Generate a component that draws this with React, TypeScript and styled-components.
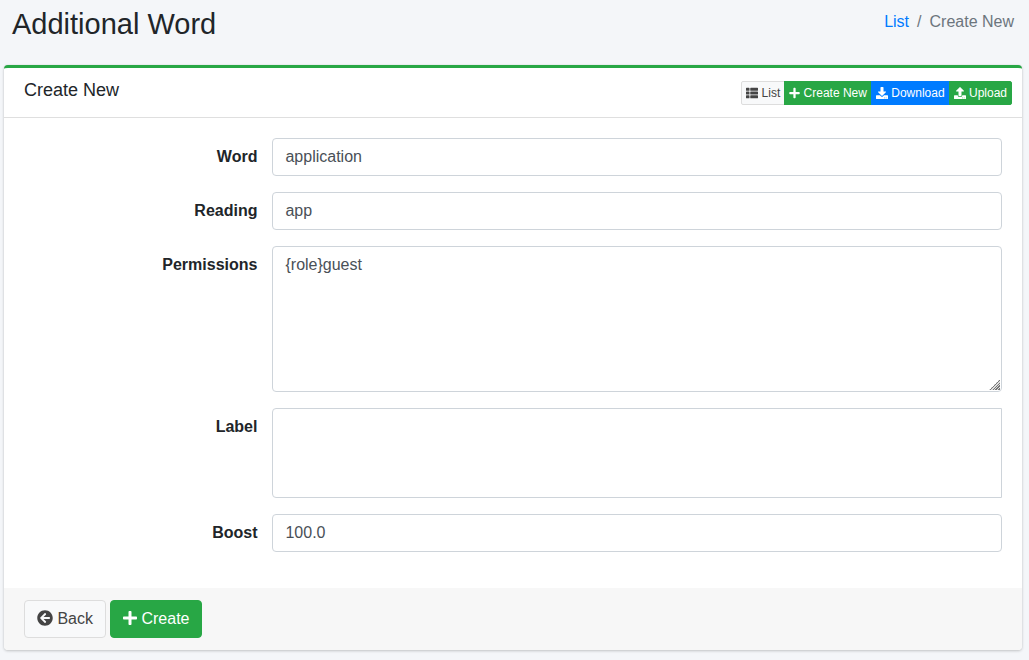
import React from "react";
import styled, { createGlobalStyle, css } from "styled-components";
import {
  FaArrowCircleLeft,
  FaDownload,
  FaPlus,
  FaThList,
  FaUpload,
} from "react-icons/fa";

const GlobalStyle = createGlobalStyle`
  *, *::before, *::after { box-sizing: border-box; }
  body {
    margin: 0;
    min-height: 100vh;
    background: #f4f6f9;
    color: #212529;
    font: 400 16px/24px "Liberation Sans", Arial, sans-serif;
  }
  input, select, textarea, button { margin: 0; font: inherit; }
`;

const Page = styled.div`
  padding: 4px 7px 9px 4px;
`;

const PageHeader = styled.header`
  display: flex;
  justify-content: space-between;
  align-items: flex-start;
  padding: 0 8px 21px;
`;

const PageTitle = styled.h1`
  margin: 0;
  font-size: 29px;
  font-weight: 400;
  line-height: 40px;
`;

const Breadcrumb = styled.ol`
  display: flex;
  margin: 0;
  padding: 6px 0 0;
  list-style: none;
  color: #6c757d;
`;

const Crumb = styled.li`
  & + &::before {
    content: "/";
    padding: 0 8px;
  }
`;

const CrumbLink = styled.a`
  color: #007bff;
  text-decoration: none;
`;

const Card = styled.form`
  border-top: 3px solid #28a745;
  border-radius: 4px;
  background: #fff;
  box-shadow: 0 0 1px rgba(0, 0, 0, 0.125), 0 1px 3px rgba(0, 0, 0, 0.2);
`;

const CardHeader = styled.div`
  display: flex;
  justify-content: space-between;
  align-items: flex-start;
  padding: 10px 10px 12px 20px;
  border-bottom: 1px solid rgba(0, 0, 0, 0.125);
`;

const CardTitle = styled.h2`
  margin: 0;
  font-size: 18px;
  font-weight: 400;
  line-height: 24px;
`;

const CardTools = styled.div`
  display: flex;
  padding-top: 3px;
`;

type Tone = "light" | "success" | "primary";

const tones: Record<Tone, ReturnType<typeof css>> = {
  light: css`
    background: #f8f9fa;
    border-color: #ddd;
    color: #444;
  `,
  success: css`
    background: #28a745;
    border-color: #28a745;
    color: #fff;
  `,
  primary: css`
    background: #007bff;
    border-color: #007bff;
    color: #fff;
  `,
};

const iconStyle = css`
  svg {
    height: 1em;
    vertical-align: -2px;
  }
`;

const PlusIcon = styled(FaPlus)<{ $small?: boolean }>`
  width: ${({ $small }) => ($small ? "11px" : "14px")};
`;

const ToolLink = styled.a<{ $tone: Tone }>`
  padding: 2px 4px;
  border: 1px solid;
  font-size: 12px;
  line-height: 18px;
  text-decoration: none;
  white-space: nowrap;
  ${iconStyle}
  ${({ $tone }) => tones[$tone]}

  & + & { margin-left: -1px; }
  &:first-child { border-radius: 2px 0 0 2px; }
  &:last-child { border-radius: 0 2px 2px 0; }
`;

const CardBody = styled.div`
  padding: 20px 20px 36px;
  display: grid;
  gap: 16px;
`;

const FormRow = styled.div`
  display: grid;
  grid-template-columns: 8fr 25fr;
  column-gap: 15px;
  align-items: start;
`;

const FieldLabel = styled.label`
  padding-top: 7px;
  font-weight: 700;
  text-align: right;
`;

const fieldStyle = css`
  display: block;
  width: 100%;
  padding: 6px 12px;
  border: 1px solid #ced4da;
  border-radius: 4px;
  background: #fff;
  color: #495057;
`;

const TextInput = styled.input`
  ${fieldStyle}
  height: 38px;
`;

const TextArea = styled.textarea`
  ${fieldStyle}
  height: 146px;
  resize: both;

  &::-webkit-resizer {
    background:
      linear-gradient(135deg, #fff 50%, transparent 50%) right 1px bottom 1px /
        11px 11px no-repeat,
      repeating-linear-gradient(135deg, #777 0 1px, #ddd 1px 2px) right 1px
        bottom 1px / 11px 11px no-repeat;
  }
`;

const ListBox = styled.select`
  ${fieldStyle}
  height: 90px;
  border-radius: 4px 0 0 4px;
`;

const CardFooter = styled.div`
  display: flex;
  gap: 4px;
  padding: 12px 20px;
  border-radius: 0 0 4px 4px;
  background: #f7f7f7;
`;

const Button = styled.button<{ $tone: Tone }>`
  padding: 6px 12px;
  border: 1px solid;
  border-radius: 4px;
  white-space: nowrap;
  ${iconStyle}
  ${({ $tone }) => tones[$tone]}
`;

export default function App() {
  return (
    <>
      <GlobalStyle />
      <Page>
        <PageHeader>
          <PageTitle>Additional Word</PageTitle>
          <nav aria-label="Breadcrumb">
            <Breadcrumb>
              <Crumb>
                <CrumbLink href="#list">List</CrumbLink>
              </Crumb>
              <Crumb aria-current="page">Create New</Crumb>
            </Breadcrumb>
          </nav>
        </PageHeader>
        <Card onSubmit={(event) => event.preventDefault()}>
          <CardHeader>
            <CardTitle>Create New</CardTitle>
            <CardTools>
              <ToolLink $tone="light" href="#list">
                <FaThList aria-hidden /> List
              </ToolLink>
              <ToolLink $tone="success" href="#create">
                <PlusIcon $small aria-hidden /> Create New
              </ToolLink>
              <ToolLink $tone="primary" href="#download">
                <FaDownload aria-hidden /> Download
              </ToolLink>
              <ToolLink $tone="success" href="#upload">
                <FaUpload aria-hidden /> Upload
              </ToolLink>
            </CardTools>
          </CardHeader>
          <CardBody>
            <FormRow>
              <FieldLabel htmlFor="word">Word</FieldLabel>
              <TextInput id="word" type="text" defaultValue="application" />
            </FormRow>
            <FormRow>
              <FieldLabel htmlFor="reading">Reading</FieldLabel>
              <TextInput id="reading" type="text" defaultValue="app" />
            </FormRow>
            <FormRow>
              <FieldLabel htmlFor="permissions">Permissions</FieldLabel>
              <TextArea id="permissions" defaultValue="{role}guest" />
            </FormRow>
            <FormRow>
              <FieldLabel htmlFor="labels">Label</FieldLabel>
              <ListBox id="labels" multiple />
            </FormRow>
            <FormRow>
              <FieldLabel htmlFor="boost">Boost</FieldLabel>
              <TextInput id="boost" type="text" defaultValue="100.0" />
            </FormRow>
          </CardBody>
          <CardFooter>
            <Button type="button" $tone="light">
              <FaArrowCircleLeft aria-hidden /> Back
            </Button>
            <Button type="submit" $tone="success">
              <PlusIcon aria-hidden /> Create
            </Button>
          </CardFooter>
        </Card>
      </Page>
    </>
  );
}
